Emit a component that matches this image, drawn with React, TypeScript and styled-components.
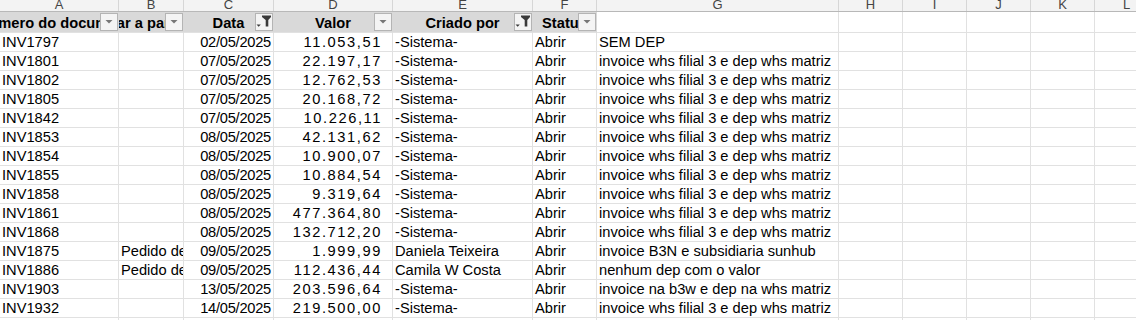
import React from "react";
import styled, { createGlobalStyle } from "styled-components";

const GlobalStyle = createGlobalStyle`
  html, body {
    margin: 0;
    padding: 0;
    background: #ffffff;
    overflow: hidden;
  }
  body {
    font-family: "Liberation Sans", Arial, sans-serif;
  }
`;

const COLS = "119px 65px 90px 119px 140px 64px 242px 64px 64px 64px 64px 64px";
const GRID = "#e1e1e1";
const HEAD_FILL = "#d9d9d9";

const Sheet = styled.div`
  width: 1136px;
  height: 320px;
  overflow: hidden;
`;

const ColHeaderRow = styled.div`
  display: grid;
  grid-template-columns: ${COLS};
  height: 12px;
  background: #f3f3f3;
  border-bottom: 1px solid #b8b8b8;
  box-sizing: border-box;
`;

const ColLetter = styled.div`
  border-right: 1px solid #d6d6d6;
  font-size: 13px;
  line-height: 9px;
  color: #444444;
  text-align: center;
  overflow: hidden;
`;

const HeaderRow = styled.div`
  display: grid;
  grid-template-columns: ${COLS};
  height: 21px;
`;

const HeaderCell = styled.div<{ $filled?: boolean }>`
  position: relative;
  overflow: hidden;
  box-sizing: border-box;
  background: ${(p) => (p.$filled ? HEAD_FILL : "#ffffff")};
  border-right: 1px solid ${(p) => (p.$filled ? HEAD_FILL : GRID)};
  border-bottom: 1px solid ${GRID};
`;

const HeaderLabel = styled.div`
  display: flex;
  justify-content: center;
  padding-top: 1px;
  font-size: 14.67px;
  font-weight: bold;
  line-height: 20px;
  color: #000000;
  white-space: nowrap;
`;

const FilterButton = styled.span`
  position: absolute;
  top: 1px;
  right: 0;
  width: 18px;
  height: 18px;
  box-sizing: border-box;
  background: #f4f4f4;
  border: 1px solid #b4b4b4;
  display: block;
`;

const DataRow = styled.div`
  display: grid;
  grid-template-columns: ${COLS};
  height: 19px;
`;

const Cell = styled.div<{ $align?: "left" | "right"; $kind?: "num" | "date" }>`
  box-sizing: border-box;
  border-right: 1px solid ${GRID};
  border-bottom: 1px solid ${GRID};
  font-size: 14.67px;
  line-height: 18px;
  color: #000000;
  white-space: nowrap;
  overflow: hidden;
  text-align: ${(p) => p.$align ?? "left"};
  padding: ${(p) =>
    p.$kind === "num" ? "0 10px 0 0" : p.$align === "right" ? "0 2px 0 0" : "0 0 0 2px"};
  letter-spacing: ${(p) => (p.$kind === "num" ? "1.6px" : p.$kind === "date" ? "-0.25px" : "normal")};
`;

const Funnel = () => (
  <svg width="16" height="16" viewBox="0 0 16 16">
    <path d="M6 1.5H15V3L12.3 6V12.5H9.7V6L6 3Z" fill="#3a3a3a" />
    <path d="M0.5 10.5H4.8L2.65 12.8Z" fill="#3a3a3a" />
  </svg>
);

const Caret = () => (
  <svg width="16" height="16" viewBox="0 0 16 16">
    <path d="M4.5 6H11.5L8 9.5Z" fill="#777777" />
  </svg>
);

type Header = { label: string; active?: boolean };

const headers: Header[] = [
  { label: "Número do documento" },
  { label: "Criar a partir de" },
  { label: "Data", active: true },
  { label: "Valor" },
  { label: "Criado por", active: true },
  { label: "Status" },
];

const letters = ["A", "B", "C", "D", "E", "F", "G", "H", "I", "J", "K", "L"];

const SYS = "-Sistema-";
const WHS = "invoice whs filial 3 e dep whs matriz";

const rows: string[][] = [
  ["INV1797", "", "02/05/2025", "11.053,51", SYS, "Abrir", "SEM DEP"],
  ["INV1801", "", "07/05/2025", "22.197,17", SYS, "Abrir", WHS],
  ["INV1802", "", "07/05/2025", "12.762,53", SYS, "Abrir", WHS],
  ["INV1805", "", "07/05/2025", "20.168,72", SYS, "Abrir", WHS],
  ["INV1842", "", "07/05/2025", "10.226,11", SYS, "Abrir", WHS],
  ["INV1853", "", "08/05/2025", "42.131,62", SYS, "Abrir", WHS],
  ["INV1854", "", "08/05/2025", "10.900,07", SYS, "Abrir", WHS],
  ["INV1855", "", "08/05/2025", "10.884,54", SYS, "Abrir", WHS],
  ["INV1858", "", "08/05/2025", "9.319,64", SYS, "Abrir", WHS],
  ["INV1861", "", "08/05/2025", "477.364,80", SYS, "Abrir", WHS],
  ["INV1868", "", "08/05/2025", "132.712,20", SYS, "Abrir", WHS],
  ["INV1875", "Pedido de venda", "09/05/2025", "1.999,99", "Daniela Teixeira", "Abrir", "invoice B3N e subsidiaria sunhub"],
  ["INV1886", "Pedido de venda", "09/05/2025", "112.436,44", "Camila W Costa", "Abrir", "nenhum dep com o valor"],
  ["INV1903", "", "13/05/2025", "203.596,64", SYS, "Abrir", "invoice na b3w e dep na whs matriz"],
  ["INV1932", "", "14/05/2025", "219.500,00", SYS, "Abrir", WHS],
  ["", "", "", "", "", "", ""],
];

const extra = ["", "", "", "", ""];

export default function App() {
  return (
    <Sheet>
      <GlobalStyle />
      <ColHeaderRow>
        {letters.map((l) => (
          <ColLetter key={l}>{l}</ColLetter>
        ))}
      </ColHeaderRow>
      <HeaderRow>
        {headers.map((h) => (
          <HeaderCell key={h.label} $filled>
            <HeaderLabel>{h.label}</HeaderLabel>
            <FilterButton>{h.active ? <Funnel /> : <Caret />}</FilterButton>
          </HeaderCell>
        ))}
        {letters.slice(6).map((l) => (
          <HeaderCell key={l} />
        ))}
      </HeaderRow>
      {rows.map((r, i) => (
        <DataRow key={i}>
          <Cell>{r[0]}</Cell>
          <Cell>{r[1]}</Cell>
          <Cell $align="right" $kind="date">{r[2]}</Cell>
          <Cell $align="right" $kind="num">{r[3]}</Cell>
          <Cell>{r[4]}</Cell>
          <Cell>{r[5]}</Cell>
          <Cell>{r[6]}</Cell>
          {extra.map((_, j) => (
            <Cell key={j} />
          ))}
        </DataRow>
      ))}
    </Sheet>
  );
}
